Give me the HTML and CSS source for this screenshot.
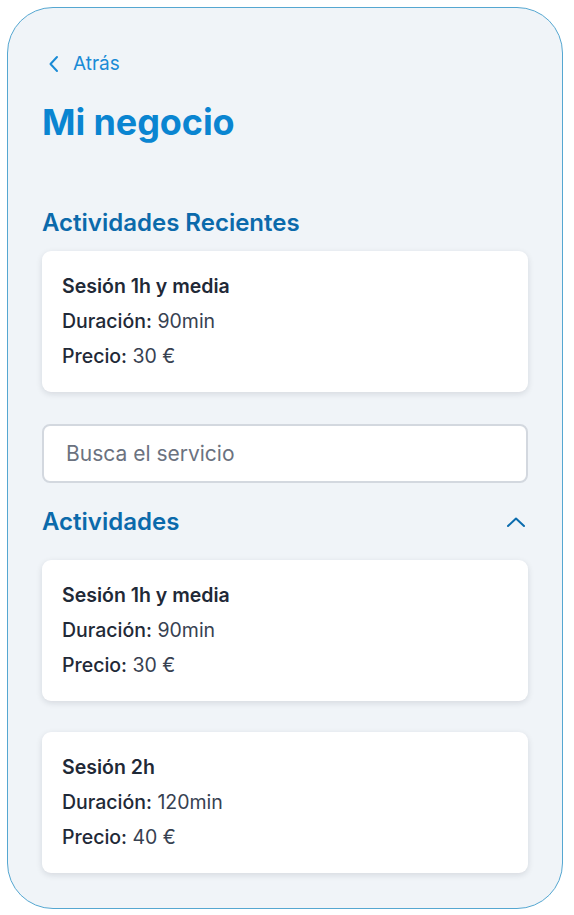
FILE: index.html
```html
<!DOCTYPE html>
<html lang="es">
<head>
<meta charset="utf-8">
<title>Mi negocio</title>
<link rel="stylesheet" href="styles.css">
</head>
<body>
<div class="frame">
  <a class="back" href="#">
    <svg class="back-icon" width="12" height="18" viewBox="0 0 12 18"><path d="M9 2 L2.5 9 L9 16" fill="none" stroke="#1a8bd6" stroke-width="2" stroke-linecap="round" stroke-linejoin="round"/></svg>
    <span>Atrás</span>
  </a>
  <h1 class="title">Mi negocio</h1>

  <h2 class="section-title recent">Actividades Recientes</h2>
  <div class="card">
    <div class="card-name">Sesión 1h y media</div>
    <div class="card-line"><span class="label">Duración:</span> 90min</div>
    <div class="card-line"><span class="label">Precio:</span> 30 €</div>
  </div>

  <div class="search">
    <input class="search-input" type="text" placeholder="Busca el servicio">
  </div>

  <div class="section-head">
    <h2 class="section-title">Actividades</h2>
    <svg class="chev-up" width="20" height="14" viewBox="0 0 20 14"><path d="M2 11 L10 3.5 L18 11" fill="none" stroke="#0b6cae" stroke-width="2" stroke-linecap="round" stroke-linejoin="round"/></svg>
  </div>

  <div class="list">
    <div class="card">
      <div class="card-name">Sesión 1h y media</div>
      <div class="card-line"><span class="label">Duración:</span> 90min</div>
      <div class="card-line"><span class="label">Precio:</span> 30 €</div>
    </div>
    <div class="card">
      <div class="card-name">Sesión 2h</div>
      <div class="card-line"><span class="label">Duración:</span> 120min</div>
      <div class="card-line"><span class="label">Precio:</span> 40 €</div>
    </div>
  </div>
</div>
</body>
</html>
```
FILE: styles.css
```css
html, body {
  margin: 0;
  padding: 0;
  background: #ffffff;
}
body {
  font-family: Inter, "Noto Sans", sans-serif;
  color: #1f2937;
}
.frame {
  box-sizing: border-box;
  margin: 7px 0 0 7px;
  width: 556px;
  height: 902px;
  border: 1.5px solid #55a7d1;
  border-radius: 46px;
  background: #f0f4f8;
  padding: 44px 34px 0 34px;
  overflow: hidden;
}
.back {
  display: flex;
  align-items: center;
  gap: 13px;
  height: 24px;
  padding-left: 6px;
  color: #1a8bd6;
  text-decoration: none;
  font-size: 19px;
  line-height: 24px;
}
.back-icon {
  display: block;
}
.title {
  margin: 24px 0 0 0;
  font-size: 36px;
  line-height: 44px;
  font-weight: 700;
  color: #0a85d1;
  letter-spacing: -0.1px;
}
.section-title {
  margin: 0;
  font-size: 24px;
  line-height: 32px;
  font-weight: 600;
  color: #0b6aab;
}
.recent {
  margin-top: 63px;
}
.card {
  box-sizing: border-box;
  background: #ffffff;
  border-radius: 9px;
  box-shadow: 0 2px 6px rgba(15, 23, 42, 0.12);
  padding: 18px 20px;
  height: 141px;
}
.recent + .card {
  margin-top: 12px;
}
.card-name {
  font-size: 19.5px;
  line-height: 35px;
  font-weight: 600;
  color: #1f2937;
}
.card-line {
  font-size: 19.5px;
  line-height: 35px;
  font-weight: 400;
  color: #374151;
}
.label {
  font-weight: 500;
  color: #1f2937;
}
.search {
  margin-top: 32px;
}
.search-input {
  box-sizing: border-box;
  display: block;
  width: 100%;
  height: 59px;
  border: 2px solid #d3d8df;
  border-radius: 8px;
  background: #ffffff;
  padding: 0 22px;
  font-family: Inter, "Noto Sans", sans-serif;
  font-size: 21px;
  color: #1f2937;
  outline: none;
}
.search-input::placeholder {
  color: #6b7280;
}
.section-head {
  display: flex;
  align-items: center;
  justify-content: space-between;
  margin-top: 23px;
  padding-right: 2px;
}
.chev-up {
  display: block;
}
.list {
  display: flex;
  flex-direction: column;
  gap: 31px;
  margin-top: 22px;
}
```
